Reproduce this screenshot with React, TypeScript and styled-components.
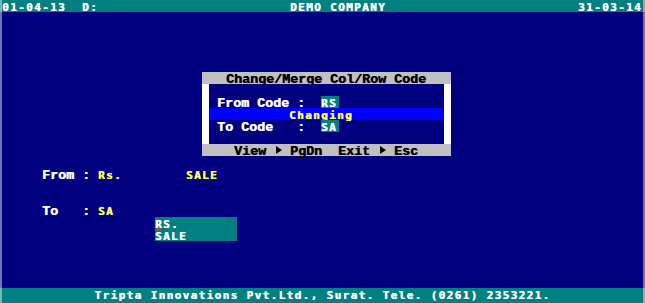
import React from 'react';
import styled, { createGlobalStyle, css } from 'styled-components';

const NAVY = '#000080';
const TEAL = '#008080';
const GREY = '#c0c0c0';
const BRIGHT = '#0000ff';
const YELLOW = '#ffff55';

const GlobalStyle = createGlobalStyle`
  html, body {
    margin: 0;
    padding: 0;
    background: ${NAVY};
  }
  body {
    width: 645px;
    height: 303px;
    overflow: hidden;
  }
`;

// dos cell = 8px wide, 12px tall
const sansFace = css`
  font-family: "DejaVu Sans Mono", monospace;
  font-weight: bold;
  font-size: 11px;
  letter-spacing: 1.38px;
  text-shadow: 0.5px 0 0 currentColor;
`;

const serifFace = css`
  font-family: "Liberation Mono", "Courier New", monospace;
  font-weight: bold;
  font-size: 13.33px;
  letter-spacing: 0;
  text-shadow: 0.5px 0 0 currentColor;
`;

const Screen = styled.div`
  position: relative;
  width: 645px;
  height: 303px;
  display: flex;
  flex-direction: column;
  background: ${NAVY};
  overflow: hidden;

  &::before,
  &::after {
    content: '';
    position: absolute;
    top: 0;
    bottom: 0;
    width: 2px;
    background: rgba(255, 255, 255, 0.45);
    pointer-events: none;
  }
  &::before { left: 0; }
  &::after { right: 0; }
`;

const Row = styled.div<{ $bg?: string; $indent?: number }>`
  display: flex;
  flex-shrink: 0;
  height: 12px;
  line-height: 15px;
  white-space: pre;
  padding-left: ${(p) => p.$indent ?? 0}px;
  background: ${(p) => p.$bg ?? 'transparent'};
`;

const Seg = styled.span<{ $c?: string; $bg?: string; $serif?: boolean; $cols?: number }>`
  ${(p) => (p.$serif ? serifFace : sansFace)}
  color: ${(p) => p.$c ?? '#ffffff'};
  background: ${(p) => p.$bg ?? 'transparent'};
  ${(p) => p.$cols && css`width: ${p.$cols * 8}px;`}
`;

const TopBar = styled(Row)`
  background: ${TEAL};
  padding-left: 2px;
`;

const BottomBar = styled.div`
  height: 15px;
  line-height: 15px;
  display: flex;
  justify-content: center;
  white-space: pre;
  background: ${TEAL};
`;

const Main = styled.div`
  position: relative;
  flex: 1;
  padding: 156px 0 0 42px;
`;

const FormRow = styled(Row)<{ $gap?: number }>`
  margin-top: ${(p) => p.$gap ?? 0}px;
`;

const PickList = styled.div`
  position: relative;
  width: 82px;
  margin: 1px 0 0 113px;
  background: ${TEAL};
`;

const Cursor = styled.span`
  position: absolute;
  left: 0;
  top: 11px;
  width: 7px;
  height: 2px;
  background: #a04848;
`;

const Dialog = styled.div`
  position: absolute;
  left: 202px;
  top: 60px;
  width: 249px;
  display: flex;
  flex-direction: column;
`;

const DialogBody = styled.div`
  padding: 12px 0;
  border-left: 7px solid #ffffff;
  border-right: 7px solid #ffffff;
  background: ${NAVY};
`;

const Field = styled(Seg)`
  min-width: 18px;
  background: ${TEAL};
`;

const Arrow = styled.span`
  position: relative;
  width: 8px;
  height: 12px;

  &::before {
    content: '';
    position: absolute;
    left: 2px;
    top: 2px;
    border-left: 6px solid #000000;
    border-top: 4px solid transparent;
    border-bottom: 4px solid transparent;
  }
`;

export default function App() {
  return (
    <>
      <GlobalStyle />
      <Screen>
        <TopBar>
          <Seg $cols={36}>01-04-13  D:</Seg>
          <Seg $cols={36}>DEMO COMPANY</Seg>
          <Seg>31-03-14</Seg>
        </TopBar>

        <Main>
          <FormRow>
            <Seg $serif>From : </Seg>
            <Seg $c={YELLOW}>Rs.        SALE</Seg>
          </FormRow>
          <FormRow $gap={24}>
            <Seg $serif>To   : </Seg>
            <Seg $c={YELLOW}>SA</Seg>
          </FormRow>
          <PickList>
            <Row><Seg>RS.</Seg></Row>
            <Row><Seg>SALE</Seg></Row>
            <Cursor />
          </PickList>

          <Dialog>
            <Row $bg={GREY} $indent={24}>
              <Seg $serif $c="#000000">Change/Merge Col/Row Code</Seg>
            </Row>
            <DialogBody>
              <Row $indent={8}>
                <Seg $serif>From Code :  </Seg>
                <Field>RS</Field>
              </Row>
              <Row $bg={BRIGHT} $indent={80}>
                <Seg $c={YELLOW}>Changing</Seg>
              </Row>
              <Row $indent={8}>
                <Seg $serif>To Code   :  </Seg>
                <Field>SA</Field>
              </Row>
            </DialogBody>
            <Row $bg={GREY} $indent={32}>
              <Seg $serif $c="#000000">View </Seg>
              <Arrow />
              <Seg $serif $c="#000000"> PgDn  Exit </Seg>
              <Arrow />
              <Seg $serif $c="#000000"> Esc</Seg>
            </Row>
          </Dialog>
        </Main>

        <BottomBar>
          <Seg>Tripta Innovations Pvt.Ltd., Surat. Tele. (0261) 2353221.</Seg>
        </BottomBar>
      </Screen>
    </>
  );
}
